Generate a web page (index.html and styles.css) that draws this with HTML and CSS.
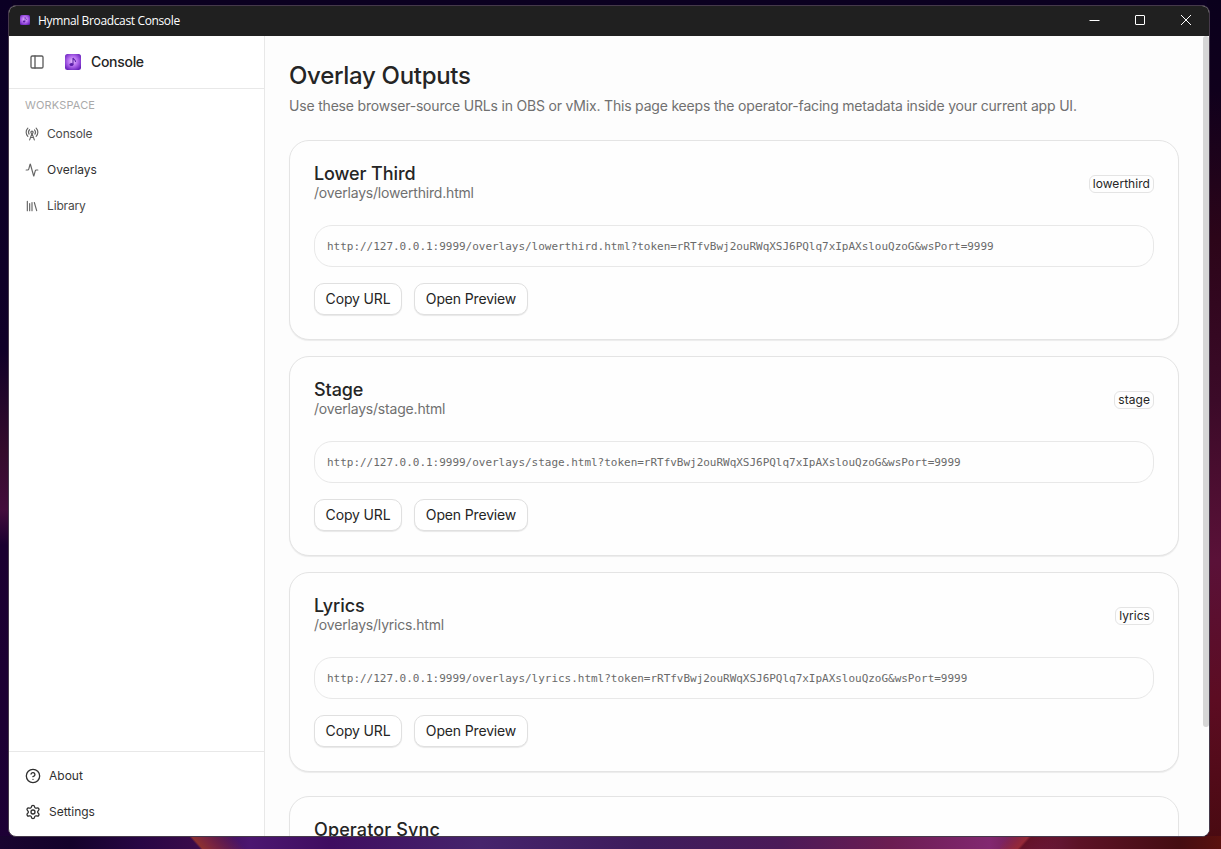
FILE: index.html
```html
<!DOCTYPE html>
<html lang="en">
<head>
  <meta charset="utf-8">
  <title>Hymnal Broadcast Console</title>
  <link rel="stylesheet" href="styles.css">
</head>
<body>
  <svg width="0" height="0" class="defs">
    <defs>
      <radialGradient id="logoFill" cx="48%" cy="45%" r="62%">
        <stop offset="0" stop-color="#e6c2fc"/>
        <stop offset=".5" stop-color="#b36aee"/>
        <stop offset="1" stop-color="#6a22bd"/>
      </radialGradient>
      <symbol id="logo" viewBox="0 0 16 16">
        <rect width="16" height="16" rx="2.5" fill="url(#logoFill)"/>
        <ellipse cx="6.500" cy="10.400" rx="2" ry="1.500" fill="#5a1fa8"/>
        <path d="M8 10.400V4c.5 1.500 2.800 1.800 2.500 4" fill="none" stroke="#5a1fa8" stroke-width="1.1"/>
      </symbol>
    </defs>
  </svg>

  <div class="window">
    <div class="titlebar">
      <svg class="app-icon"><use href="#logo"/></svg>
      <span class="app-name">Hymnal Broadcast Console</span>
      <div class="controls">
        <svg viewBox="0 0 10 10"><path d="M.5 5.500h10"/></svg>
        <svg viewBox="0 0 10 10"><rect x=".5" y=".5" width="9" height="9" rx=".5"/></svg>
        <svg viewBox="0 0 10 10"><path d="M0 0l10 10M10 0L0 10"/></svg>
      </div>
    </div>

    <div class="app">
      <aside class="sidebar">
        <div class="side-head">
          <svg class="icon toggle" viewBox="0 0 24 24"><rect x="3" y="3" width="18" height="18" rx="2"/><path d="M9 3v18"/></svg>
          <svg class="logo" viewBox="0 0 16 16"><use href="#logo"/></svg>
          <span class="brand">Console</span>
        </div>
        <div class="side-label">WORKSPACE</div>
        <nav class="side-nav">
          <a class="nav-item">
            <svg class="icon" viewBox="0 0 24 24"><path d="M4.900 16.100C1 12.200 1 5.800 4.900 1.900M7.800 4.700a6.140 6.140 0 0 0-.8 7.500"/><circle cx="12" cy="9" r="2"/><path d="M16.200 4.800c2 2 2.260 5.110.8 7.470M19.100 1.900a9.960 9.960 0 0 1 0 14.100M9.500 18h5M8 22l4-11 4 11"/></svg>
            <span>Console</span>
          </a>
          <a class="nav-item active">
            <svg class="icon" viewBox="0 0 24 24"><path d="M22 12h-2.480a2 2 0 0 0-1.930 1.460l-2.350 8.360a.25.25 0 0 1-.48 0L9.240 2.180a.25.25 0 0 0-.48 0l-2.350 8.360A2 2 0 0 1 4.490 12H2"/></svg>
            <span>Overlays</span>
          </a>
          <a class="nav-item">
            <svg class="icon" viewBox="0 0 24 24"><path d="M16 6l4 14M12 6v14M8 8v12M4 4v16"/></svg>
            <span>Library</span>
          </a>
        </nav>
        <div class="side-foot">
          <a class="foot-item">
            <svg class="icon" viewBox="0 0 24 24"><circle cx="12" cy="12" r="10"/><path d="M9.090 9a3 3 0 0 1 5.830 1c0 2-3 3-3 3M12 17h.01"/></svg>
            <span>About</span>
          </a>
          <a class="foot-item">
            <svg class="icon" viewBox="0 0 24 24"><path d="M9.671 4.136a2.340 2.340 0 0 1 4.659 0 2.340 2.340 0 0 0 3.319 1.915 2.340 2.340 0 0 1 2.330 4.033 2.340 2.340 0 0 0 0 3.831 2.340 2.340 0 0 1-2.330 4.033 2.340 2.340 0 0 0-3.319 1.915 2.340 2.340 0 0 1-4.659 0 2.340 2.340 0 0 0-3.320-1.915 2.340 2.340 0 0 1-2.330-4.033 2.340 2.340 0 0 0 0-3.831A2.340 2.340 0 0 1 6.350 6.051a2.340 2.340 0 0 0 3.319-1.915"/><circle cx="12" cy="12" r="3"/></svg>
            <span>Settings</span>
          </a>
        </div>
      </aside>

      <main class="content">
        <div class="page">
          <h1>Overlay Outputs</h1>
          <p class="lead">Use these browser-source URLs in OBS or vMix. This page keeps the operator-facing metadata inside your current app UI.</p>
          <div class="cards">
            <section class="card">
              <div class="card-head">
                <div>
                  <h2>Lower Third</h2>
                  <p class="path">/overlays/lowerthird.html</p>
                </div>
                <span class="badge">lowerthird</span>
              </div>
              <div class="url">http://127.0.0.1:9999/overlays/lowerthird.html?token=rRTfvBwj2ouRWqXSJ6PQlq7xIpAXslouQzoG&amp;wsPort=9999</div>
              <div class="actions">
                <button class="btn copy">Copy URL</button>
                <button class="btn open">Open Preview</button>
              </div>
            </section>
            <section class="card">
              <div class="card-head">
                <div>
                  <h2>Stage</h2>
                  <p class="path">/overlays/stage.html</p>
                </div>
                <span class="badge">stage</span>
              </div>
              <div class="url">http://127.0.0.1:9999/overlays/stage.html?token=rRTfvBwj2ouRWqXSJ6PQlq7xIpAXslouQzoG&amp;wsPort=9999</div>
              <div class="actions">
                <button class="btn copy">Copy URL</button>
                <button class="btn open">Open Preview</button>
              </div>
            </section>
            <section class="card">
              <div class="card-head">
                <div>
                  <h2>Lyrics</h2>
                  <p class="path">/overlays/lyrics.html</p>
                </div>
                <span class="badge">lyrics</span>
              </div>
              <div class="url">http://127.0.0.1:9999/overlays/lyrics.html?token=rRTfvBwj2ouRWqXSJ6PQlq7xIpAXslouQzoG&amp;wsPort=9999</div>
              <div class="actions">
                <button class="btn copy">Copy URL</button>
                <button class="btn open">Open Preview</button>
              </div>
            </section>
          </div>
          <section class="card sync">
            <h2>Operator Sync</h2>
          </section>
        </div>
        <div class="scrollbar"></div>
      </main>
    </div>
  </div>
</body>
</html>
```
FILE: styles.css
```css
* {
  box-sizing: border-box;
}
html, body {
  height: 100%;
}
body {
  margin: 0;
  padding: 5px 11px 12px 8px;
  overflow: hidden;
  font-family: Inter, "Liberation Sans", sans-serif;
  color: #252525;
  /* desktop wallpaper showing round the window */
  background:
    linear-gradient(48deg, transparent 21%, #8c3030 25%, #7a2440 42%, transparent 85%) 185px 100% / 60px 13px no-repeat,
    linear-gradient(132deg, transparent 10%, #962a38 40%, #641228 45%, transparent 100%) 1000px 100% / 60px 13px no-repeat,
    linear-gradient(90deg, #19042f 0, #14022a 70px, #280644 140px, #3a0a4a 195px, #4c1670 250px, #3f0d60 330px, #46246c 480px, #3e1c5c 640px, #4b1a58 780px, #6b1d52 890px, #822870 990px, #6c1a40 1035px, #5c1226 1080px, #450d12 1180px, #5a100e 1221px) 0 100% / 100% 13px no-repeat,
    linear-gradient(180deg, #0a001c 0, #10001c 90px, #2c0519 240px, #3b0a28 400px, #5a1138 560px, #5c0c22 700px, #480a10 849px) 100% 0 / 14px 100% no-repeat,
    linear-gradient(180deg, #0b0024 0, #100028 350px, #340c2c 450px, #430d3c 510px, #1b0030 545px, #1d0035 849px) 0 0 / 12px 100% no-repeat,
    #0b0020;
}
h1, h2, p {
  margin: 0;
}
.defs {
  position: absolute;
}
.icon {
  width: 14px;
  height: 14px;
  flex: none;
  fill: none;
  stroke: currentColor;
  stroke-width: 2;
  stroke-linecap: round;
  stroke-linejoin: round;
}

.window {
  height: 100%;
  display: flex;
  flex-direction: column;
  overflow: hidden;
  border: 1px solid #45394a;
  border-radius: 8px;
  background: #fff;
}
.titlebar {
  height: 30px;
  flex: none;
  display: flex;
  align-items: center;
  padding-left: 11px;
  background: #202020;
  color: #fff;
}
.app-icon {
  width: 10px;
  height: 10px;
  margin-top: -2px;
}
.app-name {
  margin: -2px 0 0 8px;
  font: 12px "Open Sans", sans-serif;
  letter-spacing: -0.36px;
}
.controls {
  display: flex;
  gap: 36px;
  margin: -2px 18px 0 auto;
}
.controls svg {
  width: 10px;
  height: 10px;
  fill: none;
  stroke: #fff;
  overflow: visible;
}

.app {
  flex: 1;
  min-height: 0;
  display: flex;
}
.sidebar {
  width: 256px;
  flex: none;
  display: flex;
  flex-direction: column;
  border-right: 1px solid #e8e8e8;
}
.side-head {
  height: 53px;
  display: flex;
  align-items: center;
  padding-left: 20px;
  border-bottom: 1px solid #e8e8e8;
}
.toggle {
  width: 16px;
  height: 16px;
  color: #5c5c5c;
}
.logo {
  width: 16px;
  height: 16px;
  margin: 0 10px 0 20px;
}
.brand {
  margin-top: -1px;
  font-size: 14px;
  font-weight: 500;
  letter-spacing: -0.3px;
}
.side-label {
  padding: 8px 16px 3px;
  font-size: 11px;
  line-height: 16px;
  letter-spacing: 0.15px;
  color: #aaa;
}
.nav-item, .foot-item {
  height: 36px;
  display: flex;
  align-items: center;
  gap: 8px;
  padding-left: 16px;
  font-size: 12px;
  color: #4a4a4a;
}
.nav-item span, .foot-item span {
  margin-top: -1px;
}
.nav-item {
  letter-spacing: -0.15px;
}
.nav-item .icon {
  color: #666;
}
.active {
  color: #303030;
  letter-spacing: 0;
}
.side-foot {
  margin-top: auto;
  padding: 6px 0;
  border-top: 1px solid #e8e8e8;
}
.foot-item {
  color: #303030;
}
.foot-item .icon {
  width: 16px;
  height: 16px;
}

.content {
  flex: 1;
  min-width: 0;
  display: flex;
  overflow: hidden;
  background: #fdfdfd;
}
.page {
  flex: 1;
  padding: 24px;
}
.scrollbar {
  width: 6px;
  height: 691px;
  border-radius: 3px;
  background: #d6d6d6;
}
h1 {
  font-size: 24px;
  line-height: 32px;
  font-weight: 500;
  letter-spacing: -0.3px;
}
.lead {
  margin-top: 4px;
  font-size: 14px;
  line-height: 20px;
  letter-spacing: -0.19px;
  color: #707070;
  white-space: nowrap;
}
.cards {
  display: flex;
  flex-direction: column;
  gap: 16px;
  margin: 24px 0;
}
.card {
  height: 200px;
  padding: 24px;
  border: 1px solid #e4e4e4;
  border-radius: 20px;
  background: #fefefe;
  box-shadow: 0 1px 1px rgba(0, 0, 0, 0.07);
}
.card-head {
  display: flex;
  justify-content: space-between;
  align-items: center;
  height: 38px;
}
h2 {
  font-size: 18px;
  line-height: 18px;
  font-weight: 500;
  letter-spacing: -0.1px;
}
.sync h2 {
  letter-spacing: 0.12px;
}
.path {
  font-size: 14px;
  line-height: 20px;
  letter-spacing: -0.19px;
  color: #707070;
}
.badge {
  height: 18px;
  padding: 0 3px;
  border: 1px solid #e4e4e4;
  border-radius: 6px;
  font-size: 12px;
  line-height: 16px;
  letter-spacing: 0.05px;
}
.url {
  height: 42px;
  margin-top: 22px;
  padding: 1px 12px 0;
  border: 1px solid #e8e8e8;
  border-radius: 18px;
  font: 11px/40px "DejaVu Sans Mono", monospace;
  letter-spacing: -0.022px;
  color: #6a6a6a;
}
.actions {
  display: flex;
  gap: 12px;
  margin-top: 16px;
}
.btn {
  height: 32px;
  padding: 0 0 1px;
  border: 1px solid #e0e0e0;
  border-radius: 10px;
  background: #fff;
  color: #252525;
  font: 14px Inter, "Liberation Sans", sans-serif;
  letter-spacing: -0.15px;
  box-shadow: 0 1px 1px rgba(0, 0, 0, 0.09);
}
.copy {
  width: 88px;
}
.open {
  width: 114px;
}
```
